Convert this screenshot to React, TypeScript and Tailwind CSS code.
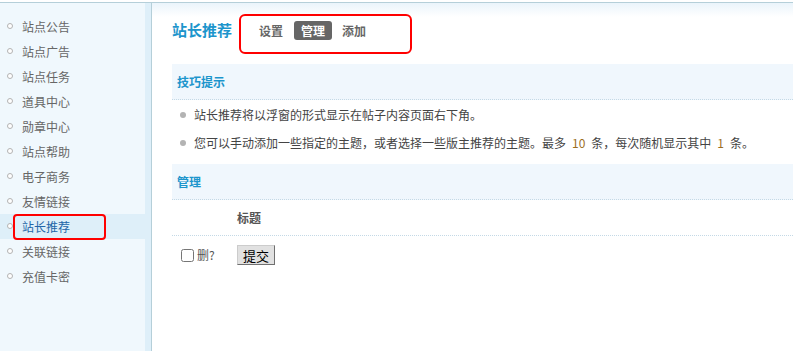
import React from "react";

const menu = [
  "站点公告",
  "站点广告",
  "站点任务",
  "道具中心",
  "勋章中心",
  "站点帮助",
  "电子商务",
  "友情链接",
  "站长推荐",
  "关联链接",
  "充值卡密",
];

export default function App() {
  return (
    <div className="h-screen flex flex-col bg-white pt-[2px] text-[12px] font-['Noto_Sans_CJK_SC','Noto_Sans',sans-serif] overflow-hidden">
      <div className="flex flex-1 border-t border-[#b5cfd9]">
        {/* SIDEBAR */}
        <aside className="flex w-[152px] shrink-0 border-r border-[#b5cfd9]">
          <ul className="w-[145px] bg-[#f0f8fd] pt-[11px]">
            {menu.map((m) => {
              const on = m === "站长推荐";
              return (
                <li
                  key={m}
                  className={`relative flex h-[25px] items-center pl-[22px] ${
                    on ? "bg-[#deeff9] text-[#2366a8]" : "text-[#666]"
                  }`}
                >
                  <span className="absolute left-[7px] top-[9px] h-[6px] w-[6px] rounded-full border border-[#b3b3b3] bg-white" />
                  {m}
                  {on && (
                    <span className="absolute left-[13px] top-[0px] h-[26px] w-[93px] rounded-[4px] border-[2px] border-[#ff0000]" />
                  )}
                </li>
              );
            })}
          </ul>
          <div className="flex-1 bg-[#deeff9]" />
        </aside>

        {/* MAIN */}
        <main className="flex-1 pl-[20px] bg-gradient-to-b from-[#eaf4fb] via-white via-[14px] to-white">
          <div className="relative flex h-[55px] items-center">
            <h3 className="text-[15px] font-bold text-[#1c95cc]">站长推荐</h3>
            <div className="ml-[26px] flex items-center gap-[10px] font-bold text-[#666]">
              <span className="px-[1px]">设置</span>
              <span className="flex h-[19px] items-center rounded-[3px] bg-[#666] px-[7px] text-white">管理</span>
              <span>添加</span>
            </div>
            <span className="absolute left-[67px] top-[11px] h-[40px] w-[173px] rounded-[6px] border-[2px] border-[#ff0000]" />
          </div>

          <div className="mt-[6px] flex h-[36px] items-center border-b border-dotted border-[#c4d9e6] bg-[#f0f7fd] pl-[5px] font-bold text-[#1c95cc]">
            技巧提示
          </div>
          <ul className="pt-[1px] text-[#444]">
            <li className="flex h-[28px] items-center pl-[8px]">
              <span className="mr-[8px] h-[6px] w-[6px] rounded-full bg-[#b3b3b3]" />
              站长推荐将以浮窗的形式显示在帖子内容页面右下角。
            </li>
            <li className="flex h-[28px] items-center pl-[8px]">
              <span className="mr-[8px] h-[6px] w-[6px] rounded-full bg-[#b3b3b3]" />
              您可以手动添加一些指定的主题，或者选择一些版主推荐的主题。最多
              <span className="px-[6px] text-[#9c6f1f]">10</span>条，每次随机显示其中
              <span className="px-[6px] text-[#9c6f1f]">1</span>条。
            </li>
          </ul>

          <div className="mt-[7px] flex h-[36px] items-center border-b border-dotted border-[#c4d9e6] bg-[#f0f7fd] pl-[5px] font-bold text-[#1c95cc]">
            管理
          </div>
          <div className="flex h-[36px] items-center border-b border-dotted border-[#c4d9e6]">
            <div className="w-[65px]" />
            <div className="font-bold text-[#555]">标题</div>
          </div>
          <div className="flex h-[38px] items-center">
            <label className="flex w-[65px] items-center pl-[9px] text-[#555]">
              <input type="checkbox" className="m-0 mr-[3px] h-[13px] w-[13px]" />
              删?
            </label>
            <button className="h-[20px] border border-t-[#ccc] border-l-[#ccc] border-r-[#707070] border-b-[#707070] bg-[#e1e1e1] px-[5px] text-[13px] leading-none text-black">
              提交
            </button>
          </div>
        </main>
      </div>
    </div>
  );
}
